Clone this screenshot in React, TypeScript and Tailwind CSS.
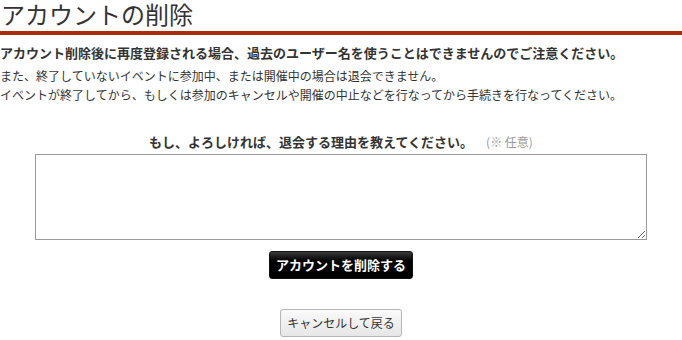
import React from "react";

export default function App() {
  return (
    <div
      className="w-[682px] h-[340px] bg-white text-[#333] overflow-hidden"
      style={{ fontFamily: '"Noto Sans CJK JP", "Liberation Sans", sans-serif' }}
    >
      <h1 className="text-[24px] leading-[28px] pb-[3px] pl-[1px] font-normal text-[#333] border-b-[4px] border-[#ae2a0c]">
        アカウントの削除
      </h1>
      <p className="mt-[9px] text-[13px] leading-[18px] font-bold text-[#333]">
        アカウント削除後に再度登録される場合、過去のユーザー名を使うことはできませんのでご注意ください。
      </p>
      <p className="mt-[4px] text-[12px] leading-[19px] text-[#333]">
        また、終了していないイベントに参加中、または開催中の場合は退会できません。
        <br />
        イベントが終了してから、もしくは参加のキャンセルや開催の中止などを行なってから手続きを行なってください。
      </p>
      <div className="mt-[30px] flex flex-col items-center">
        <label className="flex items-center gap-[13px] text-[13px] leading-[16px] font-bold text-[#333]">
          <span>もし、よろしければ、退会する理由を教えてください。</span>
          <span className="text-[12px] font-normal text-[#999]">(※ 任意)</span>
        </label>
        <textarea className="mt-[4px] w-[612px] h-[86px] border border-[#9a9a9a] bg-white resize-y outline-none" />
        <button className="mt-[11px] w-[144px] h-[28px] rounded-[3px] bg-gradient-to-b from-[#3a3a3a] via-[#000] to-[#000] text-white text-[13px] font-bold leading-[26px] border border-[#111]">
          アカウントを削除する
        </button>
        <button className="mt-[30px] w-[122px] h-[28px] rounded-[3px] bg-gradient-to-b from-[#fafafa] to-[#e6e6e6] text-[#333] text-[12px] leading-[26px] border border-[#b5b5b5]">
          キャンセルして戻る
        </button>
      </div>
    </div>
  );
}
